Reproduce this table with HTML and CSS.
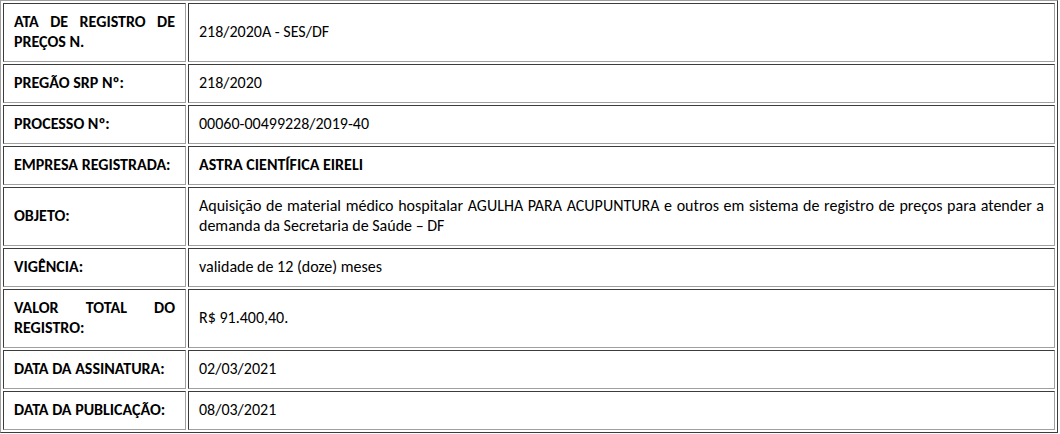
FILE: index.html
```html
<!DOCTYPE html>
<html lang="pt-BR">
<head>
<meta charset="utf-8">
<title>Ata de Registro de Preços</title>
<link rel="stylesheet" href="styles.css">
</head>
<body>
<table class="ata">
  <tbody>
    <tr>
      <th class="label">ATA DE REGISTRO DE PREÇOS N.</th>
      <td class="value">218/2020A - SES/DF</td>
    </tr>
    <tr>
      <th class="label">PREGÃO SRP Nº:</th>
      <td class="value">218/2020</td>
    </tr>
    <tr>
      <th class="label">PROCESSO Nº:</th>
      <td class="value">00060-00499228/2019-40</td>
    </tr>
    <tr>
      <th class="label">EMPRESA REGISTRADA:</th>
      <td class="value strong">ASTRA CIENTÍFICA EIRELI</td>
    </tr>
    <tr>
      <th class="label">OBJETO:</th>
      <td class="value">Aquisição de material médico hospitalar AGULHA PARA ACUPUNTURA e outros em sistema de registro de preços para atender a demanda da Secretaria de Saúde – DF</td>
    </tr>
    <tr>
      <th class="label">VIGÊNCIA:</th>
      <td class="value">validade de 12 (doze) meses</td>
    </tr>
    <tr>
      <th class="label">VALOR TOTAL DO REGISTRO:</th>
      <td class="value">R$ 91.400,40.</td>
    </tr>
    <tr>
      <th class="label">DATA DA ASSINATURA:</th>
      <td class="value">02/03/2021</td>
    </tr>
    <tr>
      <th class="label">DATA DA PUBLICAÇÃO:</th>
      <td class="value">08/03/2021</td>
    </tr>
  </tbody>
</table>
</body>
</html>
```

FILE: styles.css
```css
html, body {
  margin: 0;
  padding: 0;
  background: #ffffff;
}

body {
  font-family: Calibri, Carlito, Lato, "Liberation Sans", sans-serif;
  font-size: 16px;
  color: #000000;
}

.ata {
  width: 1058px;
  border-collapse: separate;
  border-spacing: 2px;
  border: 1px solid;
  border-color: #a0a0a0 #3c3c3c #3c3c3c #a0a0a0;
  table-layout: fixed;
}

.label,
.value {
  border: 1px solid;
  border-color: #3c3c3c #a0a0a0 #a0a0a0 #3c3c3c;
  padding: 8px 10px 9px 10px;
  line-height: 20px;
  vertical-align: middle;
  text-align: justify;
}

.label {
  width: 161px;
  font-weight: bold;
}

.value {
  font-weight: normal;
}

.value.strong {
  font-weight: bold;
}
```
